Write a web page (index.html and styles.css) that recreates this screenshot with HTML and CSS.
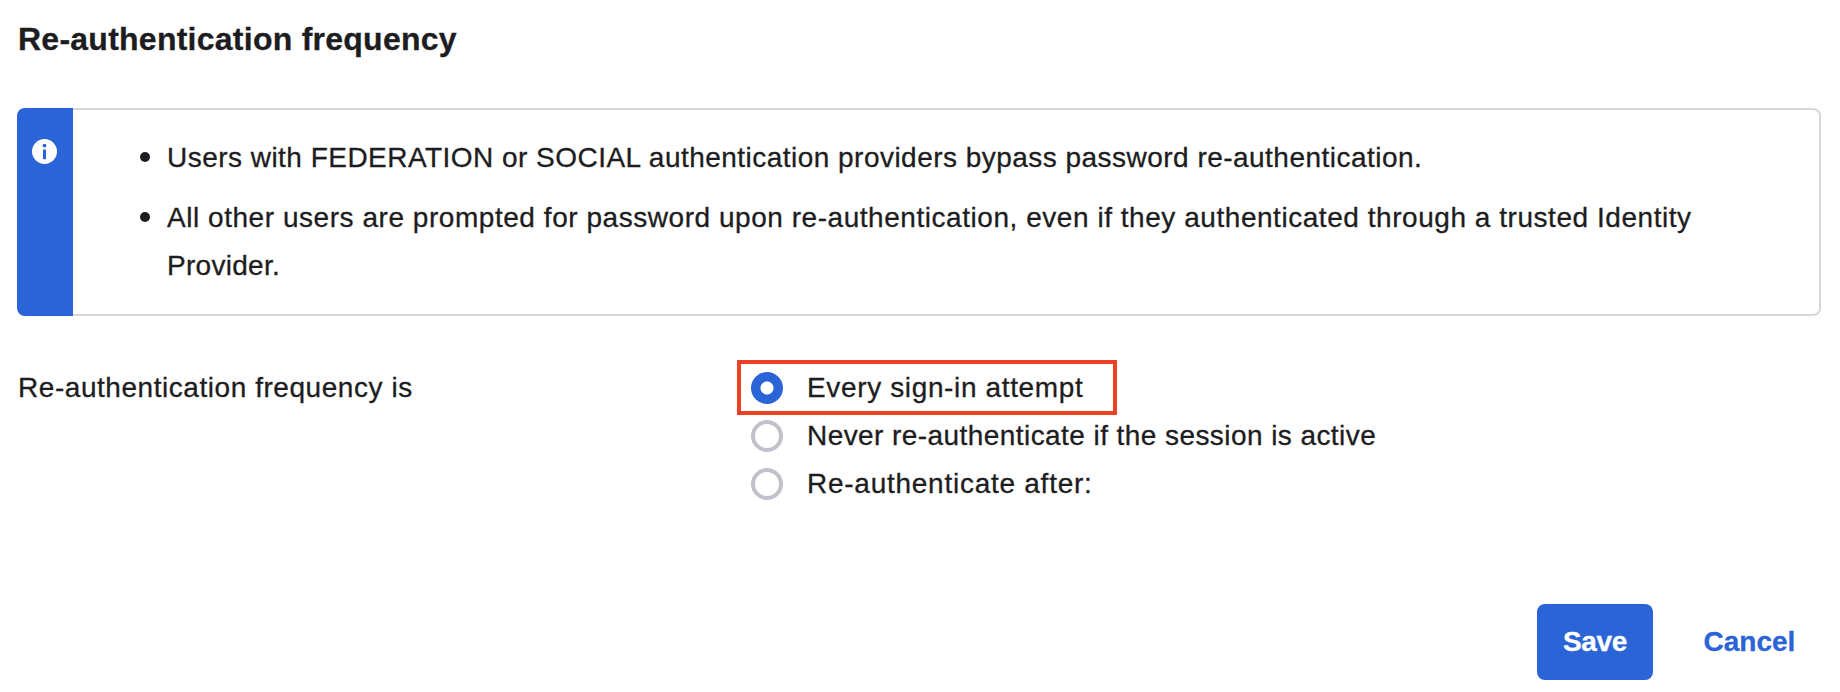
FILE: index.html
```html
<!DOCTYPE html>
<html lang="en">
<head>
<meta charset="utf-8">
<title>Re-authentication frequency</title>
<link rel="stylesheet" href="styles.css">
</head>
<body>
<main class="page">
  <h2 class="title">Re-authentication frequency</h2>
  <section class="callout">
    <div class="callout-side">
      <svg class="info-icon" viewBox="0 0 25 25" aria-hidden="true">
        <circle cx="12.5" cy="12.5" r="12.5" fill="#fff"/>
        <circle cx="12.5" cy="6.6" r="1.9" fill="#2a64d6"/>
        <rect x="11" y="10.4" width="3" height="9.8" rx="0.4" fill="#2a64d6"/>
      </svg>
    </div>
    <ul class="notes">
      <li class="note note-providers">Users with FEDERATION or SOCIAL authentication providers bypass password re-authentication.</li>
      <li class="note">All other users are prompted for password upon re-authentication, even if they authenticated through a trusted Identity <span class="note-tail">Provider.</span></li>
    </ul>
  </section>
  <form class="field">
    <div class="field-label">Re-authentication frequency is</div>
    <div class="options">
      <label class="option option-every"><span class="radio radio-checked"></span><span class="option-text">Every sign-in attempt</span><span class="highlight"></span></label>
      <label class="option option-never"><span class="radio"></span><span class="option-text">Never re-authenticate if the session is active</span></label>
      <label class="option option-after"><span class="radio"></span><span class="option-text">Re-authenticate after:</span></label>
    </div>
  </form>
  <footer class="actions">
    <button class="button button-primary" type="button">Save</button>
    <button class="button button-link" type="button">Cancel</button>
  </footer>
</main>
</body>
</html>
```

FILE: styles.css
```css
* { box-sizing: border-box; }
body {
  margin: 0;
  background: #fff;
  color: #1d1d21;
  font: 28px/48px "Liberation Sans", Arial, sans-serif;
  -webkit-text-stroke: 0.3px;
}
.page {
  height: 692px;
  padding: 15px 19px 12px 17px;
  display: flex;
  flex-direction: column;
}
.title {
  margin: 0;
  padding-left: 1px;
  font-size: 32px;
  line-height: 48px;
  font-weight: 700;
  letter-spacing: 0.25px;
}
.callout {
  margin-top: 45px;
  height: 208px;
  display: flex;
  border: 2px solid #d7d7dc;
  border-left: 0;
  border-radius: 8px;
}
.callout-side {
  width: 56px;
  margin: -2px 0;
  padding: 31px 0 0 15px;
  background: #2a64d6;
  border-radius: 8px 0 0 8px;
}
.info-icon { display: block; width: 25px; height: 25px; }
.notes {
  flex: 1;
  margin: 0;
  padding: 24px 90px 0 94px;
  display: flex;
  flex-direction: column;
  gap: 12px;
  list-style: none;
}
.note {
  position: relative;
  letter-spacing: 0.543px;
}
.note::before {
  content: "";
  position: absolute;
  left: -27px;
  top: 18px;
  width: 10px;
  height: 10px;
  border-radius: 50%;
  background: #1d1d21;
}
.note-providers { letter-spacing: 0.472px; }
.note-tail { letter-spacing: 0.285px; }
.field {
  margin-top: 48px;
  display: grid;
  grid-template-columns: 734px 1fr;
}
.field-label { padding-left: 1px; letter-spacing: 0.55px; }
.options { display: flex; flex-direction: column; align-items: flex-start; }
.option {
  position: relative;
  height: 48px;
  display: flex;
  align-items: center;
  gap: 24px;
}
.option-every { letter-spacing: 0.639px; }
.option-never { letter-spacing: 0.43px; }
.option-after { letter-spacing: 0.74px; }
.radio {
  width: 32px;
  height: 32px;
  border: 4px solid #c1c1c8;
  border-radius: 50%;
}
.radio-checked {
  border: 0;
  background: radial-gradient(circle, #fff 6px, #2a64d6 7px);
}
.highlight {
  position: absolute;
  left: -14px;
  top: -4px;
  width: 380px;
  height: 55px;
  border: 4px solid #ec4027;
}
.actions {
  margin-top: auto;
  display: flex;
  justify-content: flex-end;
  gap: 25px;
}
.button {
  height: 76px;
  padding: 0;
  border: 0;
  border-radius: 8px;
  font: 700 28px/48px "Liberation Sans", Arial, sans-serif;
}
.button-primary { width: 116px; background: #2a64d6; color: #fff; letter-spacing: -0.3px; }
.button-link { width: 143px; background: none; color: #2a64d6; }
```
